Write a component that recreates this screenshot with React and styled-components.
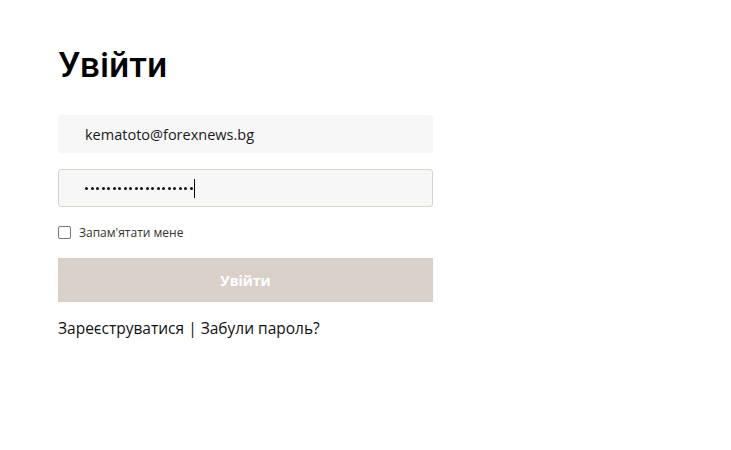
import React from "react";
import styled, { createGlobalStyle } from "styled-components";

const GlobalStyle = createGlobalStyle`
    html, body {
        margin: 0;
        padding: 0;
        background: #ffffff;
        font-family: "Open Sans", "Lato", sans-serif;
    }
`;

const Page = styled.div`
    padding: 44px 58px;
`;

const StyledForm = styled.form`
    width: 375px;
    display: flex;
    flex-direction: column;
`;

const Title = styled.h1`
    margin: 0 0 29px;
    font-family: "Roboto", "Liberation Sans", sans-serif;
    font-size: 35.5px;
    font-weight: 500;
    line-height: 42px;
    color: #000;
`;

const Field = styled.div`
    box-sizing: border-box;
    height: 38px;
    margin-bottom: 16px;
    padding: 0 26px;
    display: flex;
    align-items: center;
    background: #f7f7f7;
    border: 1px solid ${({ focused }) => (focused ? "#d9d3cc" : "#f7f7f7")};
    border-radius: 3px;
    font-size: 14.5px;
    font-weight: 400;
    color: #1a1a1a;
`;

const Dots = styled.span`
    display: flex;
    gap: 2.5px;

    i {
        width: 3px;
        height: 3px;
        border-radius: 50%;
        background: #111;
    }
`;

const Caret = styled.span`
    width: 1px;
    height: 19px;
    margin-left: 1px;
    background: #000;
`;

const Remember = styled.label`
    display: flex;
    align-items: center;
    gap: 8px;
    margin: 1px 0 17px;
    font-size: 12px;
    color: #333;

    span {
        box-sizing: border-box;
        width: 13px;
        height: 13px;
        border: 1px solid #767676;
        border-radius: 2px;
        background: #fff;
    }
`;

const Button = styled.div`
    height: 44px;
    display: flex;
    align-items: center;
    justify-content: center;
    background: #d8d0c9;
    color: #fff;
    font-size: 14px;
    font-weight: 700;
`;

const Links = styled.p`
    margin: 15px 0 0;
    font-size: 15.5px;
    color: #111;
`;

export default function App() {
    const dots = Array.from({ length: 20 }, (_, i) => <i key={i} />);
    return (
        <>
            <GlobalStyle />
            <Page>
                <StyledForm>
                    <Title>Увійти</Title>
                    <Field>kematoto@forexnews.bg</Field>
                    <Field focused>
                        <Dots>{dots}</Dots>
                        <Caret />
                    </Field>
                    <Remember>
                        <span />
                        Запам'ятати мене
                    </Remember>
                    <Button>Увійти</Button>
                    <Links>Зареєструватися | Забули пароль?</Links>
                </StyledForm>
            </Page>
        </>
    );
}
